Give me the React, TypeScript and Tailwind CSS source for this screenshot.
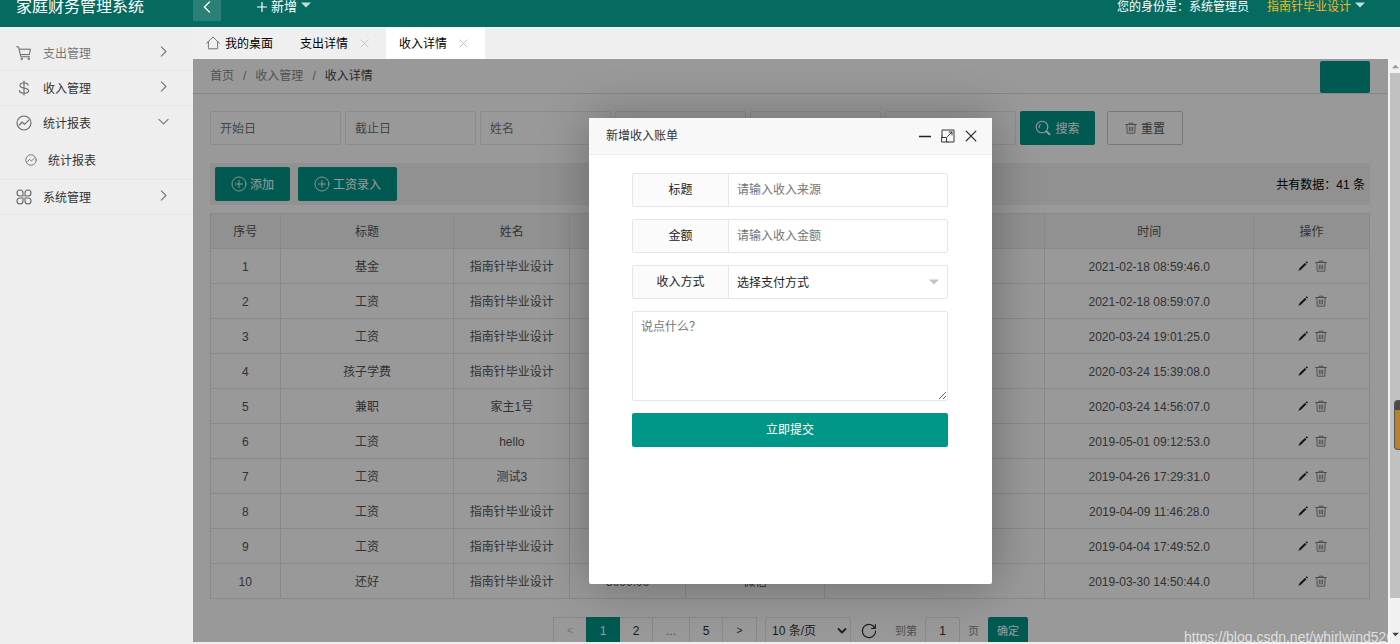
import React from 'react';

type IconProps = { className?: string };

const stroke = {
  fill: 'none',
  stroke: 'currentColor',
  strokeLinecap: 'round' as const,
  strokeLinejoin: 'round' as const,
};

const CartIcon = ({ className }: IconProps) => (
  <svg viewBox="0 0 16 16" className={className} {...stroke} strokeWidth="1">
    <path d="M0.8 1.8h1.700l2.300 10h8.800M3.400 4.200h11l-1 5.400H4.600" />
    <circle cx="5.600" cy="13.900" r="0.700" />
    <circle cx="12.600" cy="13.900" r="0.700" />
  </svg>
);

const DollarIcon = ({ className }: IconProps) => (
  <svg viewBox="0 0 16 16" className={className} {...stroke} strokeWidth="1.1">
    <path d="M8 1v14M12 5.2C12 3.6 10.4 2.8 8 2.8S4 3.8 4 5.4 5.4 7.6 8 8s4.6 1.1 4.6 2.8S10.600 13.300 8 13.300 3.400 12.300 3.400 10.600" />
  </svg>
);

const ChartIcon = ({ className }: IconProps) => (
  <svg viewBox="0 0 16 16" className={className} {...stroke} strokeWidth="1.1">
    <circle cx="8" cy="8" r="7" />
    <path d="M3.400 10l2.800-3 2.200 2.400 4.200-4" />
  </svg>
);

const CloverIcon = ({ className }: IconProps) => (
  <svg viewBox="0 0 16 16" className={className} {...stroke} strokeWidth="1.1">
    <path d="M7 7H4a3 3 0 1 1 3-3zM9 7V4a3 3 0 1 1 3 3zM7 9v3a3 3 0 1 1-3-3zM9 9h3a3 3 0 1 1-3 3z" />
  </svg>
);

const HomeIcon = ({ className }: IconProps) => (
  <svg viewBox="0 0 14 14" className={className} {...stroke} strokeWidth="0.9">
    <path d="M0.600 7.200L7 1l6.400 6.200M2.400 5.600v7.200h9.200V5.600" />
  </svg>
);

const Chevron = ({ className, d }: IconProps & { d: string }) => (
  <svg viewBox="0 0 10 10" className={className} {...stroke} strokeWidth="1">
    <path d={d} />
  </svg>
);

const RIGHT = 'M3 0.800L7.200 5 3 9.200';
const DOWN = 'M0.800 3L5 7.200 9.200 3';
const LEFT = 'M7 0.800L2.800 5 7 9.200';
const CROSS = 'M1 1l8 8M9 1l-8 8';

const Triangle = ({ className }: IconProps) => (
  <svg viewBox="0 0 10 6" className={className} fill="currentColor">
    <path d="M0 0.500h10L5 5.500z" />
  </svg>
);

const PlusCircle = ({ className }: IconProps) => (
  <svg viewBox="0 0 16 16" className={className} {...stroke} strokeWidth="0.900">
    <circle cx="8" cy="8" r="7" />
    <path d="M8 4.500v7M4.500 8h7" />
  </svg>
);

const SearchIcon = ({ className }: IconProps) => (
  <svg viewBox="0 0 16 16" className={className} {...stroke} strokeWidth="1.100">
    <circle cx="7" cy="7" r="5.800" />
    <path d="M4.200 7.600A3 3 0 0 1 5.200 4.600" />
    <path d="M11.800 11.800l2.600 2.400" strokeWidth="2" />
  </svg>
);

const TrashIcon = ({ className }: IconProps) => (
  <svg viewBox="0 0 12 12" className={className} {...stroke} strokeWidth="0.900">
    <path d="M0.600 2.500h10.800M4 2.300V1.200h4v1.100M1.800 2.700l0.400 8.500h7.600l0.400-8.500M4.300 5v4M6 5v4M7.700 5v4" />
  </svg>
);

const PencilIcon = ({ className }: IconProps) => (
  <svg viewBox="0 0 12 12" className={className} fill="currentColor">
    <path d="M9.600 1.200l1.400 1.200-0.900 1.200-1.600-1.300zM7.900 2.900l1.600 1.300-5.300 5.300L1.400 11l1.300-2.900z" />
  </svg>
);

const RefreshIcon = ({ className }: IconProps) => (
  <svg viewBox="0 0 16 16" className={className} {...stroke} strokeWidth="1.100">
    <path d="M14 5.200A6.600 6.600 0 1 0 14.600 8M14.400 1.600v3.800h-3.800" />
  </svg>
);

const ExpandIcon = ({ className }: IconProps) => (
  <svg viewBox="0 0 14 14" className={className} {...stroke} strokeWidth="0.900">
    <path d="M1 7V1h12v12H7M1 8.500h4.500V13H1zM1 7v1.500M5.500 13H7M6.500 7.500l4.500-4.500M8 3h3v3" />
  </svg>
);

const menu = [
  { label: '支出管理', Icon: CartIcon, open: false, dim: true },
  { label: '收入管理', Icon: DollarIcon, open: false, dim: false },
  { label: '统计报表', Icon: ChartIcon, open: true, dim: false },
  { label: '系统管理', Icon: CloverIcon, open: false, dim: false },
];

const rows = [
  ['1', '基金', '指南针毕业设计', '', '', '2021-02-18 08:59:46.0'],
  ['2', '工资', '指南针毕业设计', '', '', '2021-02-18 08:59:07.0'],
  ['3', '工资', '指南针毕业设计', '', '', '2020-03-24 19:01:25.0'],
  ['4', '孩子学费', '指南针毕业设计', '', '', '2020-03-24 15:39:08.0'],
  ['5', '兼职', '家主1号', '', '', '2020-03-24 14:56:07.0'],
  ['6', '工资', 'hello', '', '', '2019-05-01 09:12:53.0'],
  ['7', '工资', '测试3', '', '', '2019-04-26 17:29:31.0'],
  ['8', '工资', '指南针毕业设计', '', '', '2019-04-09 11:46:28.0'],
  ['9', '工资', '指南针毕业设计', '', '', '2019-04-04 17:49:52.0'],
  ['10', '还好', '指南针毕业设计', '8000.00', '微信', '2019-03-30 14:50:44.0'],
];

const filters = ['开始日', '截止日', '姓名', '', '', ''];

function Header() {
  return (
    <header className="flex h-[27px] shrink-0 items-end overflow-hidden bg-[#056b61] text-white">
      <div className="flex h-10 flex-1 items-center">
        <h1 className="w-[193px] shrink-0 pl-4 text-base">家庭财务管理系统</h1>
        <button aria-label="收起菜单" className="flex size-7 items-center justify-center bg-[#2a7f76]">
          <Chevron d={LEFT} className="size-3" />
        </button>
        <button className="ml-9 flex items-center gap-1 text-[13px]">
          <svg viewBox="0 0 10 10" className="size-[10px]" {...stroke} strokeWidth="1.200">
            <path d="M5 0.500v9M0.500 5h9" />
          </svg>
          新增
          <Triangle className="mb-1 h-[6px] w-[10px] text-[#c3dcd9]" />
        </button>
        <div className="ml-auto flex items-center gap-[18px] pr-[35px]">
          <span>您的身份是：系统管理员</span>
          <button className="flex items-center gap-1 text-[#f5b81a]">
            指南针毕业设计
            <Triangle className="mb-1 h-[6px] w-[10px] text-[#c3dcd9]" />
          </button>
        </div>
      </div>
    </header>
  );
}

function Sidebar() {
  return (
    <nav className="w-[193px] shrink-0 bg-[#eeeeee] pt-[9px] text-[#333]">
      <ul>
        {menu.map(({ label, Icon, open, dim }) => (
          <li key={label} className="border-b border-[#e6e6e6]">
            <a href="#" className={dim ? 'flex h-[34px] items-center pl-4 pr-6 text-[#777]' : 'flex h-[34px] items-center pl-4 pr-6'}>
              <Icon className="size-4 text-[#666]" />
              <span className="ml-[11px] pt-[2px]">{label}</span>
              <span className="ml-auto pb-1">
                <Chevron d={open ? DOWN : RIGHT} className="size-[11px] text-[#777]" />
              </span>
            </a>
            {open && (
              <a href="#" className="flex h-[39px] items-center pl-[25px]">
                <ChartIcon className="size-3 text-[#666]" />
                <span className="ml-[11px] pt-[2px]">统计报表</span>
              </a>
            )}
          </li>
        ))}
      </ul>
    </nav>
  );
}

function Tabs() {
  return (
    <div className="flex h-8 shrink-0 items-stretch bg-[#efeff0] text-black">
      <a href="#" className="flex items-center gap-[5px] pl-[13px] pr-[14px]">
        <HomeIcon className="size-[14px] text-[#666]" />
        <span className="pt-[2px]">我的桌面</span>
      </a>
      <div className="flex items-center gap-3 pl-[13px] pr-[17px]">
        <a href="#" className="pt-[2px]">支出详情</a>
        <button aria-label="关闭支出详情">
          <Chevron d={CROSS} className="size-[9px] text-[#c0c0c0]" />
        </button>
      </div>
      <div className="flex items-center gap-3 bg-white pl-[13px] pr-[17px]">
        <a href="#" className="pt-[2px]">收入详情</a>
        <button aria-label="关闭收入详情">
          <Chevron d={CROSS} className="size-[9px] text-[#c0c0c0]" />
        </button>
      </div>
    </div>
  );
}

function Pagination() {
  const cell = 'flex w-[33px] items-center justify-center border border-l-0 border-[#e4e4e4]';
  return (
    <div className="flex h-7 items-stretch pl-[343px] text-[#333]">
      <button aria-label="上一页" className="flex w-[33px] items-center justify-center border border-r-0 border-[#e4e4e4] text-[10px] text-[#bbb]">&lt;</button>
      <button className="w-[34px] bg-[#009688] text-white">1</button>
      <button className={cell}>2</button>
      <span className="flex w-[37px] items-center justify-center border border-l-0 border-[#e4e4e4] text-[#888]">...</span>
      <button className={cell}>5</button>
      <button aria-label="下一页" className="flex w-[34px] items-center justify-center border border-l-0 border-[#e4e4e4] text-[10px]">&gt;</button>
      <div className="relative ml-2 flex w-[86px]">
        <select aria-label="每页条数" className="w-full appearance-none rounded-xs border border-[#e4e4e4] bg-transparent pl-[6px]">
          <option>10 条/页</option>
        </select>
        <svg viewBox="0 0 10 10" className="pointer-events-none absolute right-1 top-[9px] size-[10px]" {...stroke} strokeWidth="1.800">
          <path d="M1.500 3L5 6.500 8.500 3" />
        </svg>
      </div>
      <button aria-label="刷新" className="ml-[10px] flex items-center">
        <RefreshIcon className="size-4" />
      </button>
      <label htmlFor="page" className="ml-[18px] flex items-center text-[11px] text-[#888]">到第</label>
      <input id="page" defaultValue="1" className="ml-2 w-[35px] rounded-xs border border-[#e4e4e4] text-center" />
      <span className="ml-2 flex items-center text-[11px] text-[#888]">页</span>
      <button className="ml-[9px] w-10 rounded-xs bg-[#009688] text-[11px] text-white">确定</button>
    </div>
  );
}

function ListPage() {
  const cell = 'border border-[#e5e5e5] p-0 pt-[2px] font-normal';
  return (
    <main className="h-full overflow-hidden bg-white text-[#555]">
      <div className="flex h-[35px] items-start border-b border-[#e0e0e0] pl-[17px] pr-[18px]">
        <ol className="flex h-[34px] items-center gap-[9px] text-[#888]">
          <li><a href="#">首页</a></li>
          <li>/</li>
          <li><a href="#">收入管理</a></li>
          <li>/</li>
          <li className="text-[#444]">收入详情</li>
        </ol>
        <button aria-label="刷新页面" className="ml-auto mt-[2px] h-8 w-[50px] rounded-xs bg-[#009688]" />
      </div>

      <div className="pl-[17px] pr-[18px]">
        <form className="mt-[17px] flex h-[34px] gap-1" onSubmit={(e) => e.preventDefault()}>
          {filters.map((f, i) => (
            <input
              key={i}
              aria-label={f || '筛选条件'}
              placeholder={f}
              className="w-[131px] rounded-xs border border-[#eaeaea] pl-[9px] pt-[2px] placeholder:text-[#757575]"
            />
          ))}
          <button className="flex w-[75px] items-center justify-center gap-1 rounded-xs bg-[#009688] text-white">
            <SearchIcon className="size-4" />
            <span className="pt-[2px]">搜索</span>
          </button>
          <button type="reset" className="ml-2 flex w-[76px] items-center justify-center gap-1 rounded-xs border border-[#c9c9c9] text-[#555]">
            <TrashIcon className="size-3 text-[#777]" />
            <span className="pt-[2px]">重置</span>
          </button>
        </form>

        <div className="mt-[18px] flex h-[42px] items-center gap-2 bg-[#f2f2f2] px-[5px]">
          <button className="flex h-[34px] w-[75px] items-center justify-center gap-[3px] rounded-xs bg-[#009688] text-white">
            <PlusCircle className="size-4" />
            <span className="pt-[2px]">添加</span>
          </button>
          <button className="flex h-[34px] w-[99px] items-center justify-center gap-[3px] rounded-xs bg-[#009688] text-white">
            <PlusCircle className="size-4" />
            <span className="pt-[2px]">工资录入</span>
          </button>
          <span className="ml-auto pt-[2px] text-black">共有数据：41 条</span>
        </div>

        <table className="mt-2 w-full table-fixed border-collapse text-center">
          <colgroup>
            <col className="w-[6%]" />
            <col className="w-[15%]" />
            <col className="w-[10%]" />
            <col className="w-[10%]" />
            <col className="w-[12%]" />
            <col className="w-[19%]" />
            <col className="w-[18%]" />
            <col className="w-[10%]" />
          </colgroup>
          <thead>
            <tr className="h-[35px] bg-[#f2f2f2]">
              {['序号', '标题', '姓名', '', '', '', '时间', '操作'].map((h, i) => (
                <th key={i} className={cell}>{h}</th>
              ))}
            </tr>
          </thead>
          <tbody>
            {rows.map(([id, title, name, amount, method, time]) => (
              <tr key={id} className="h-[35px]">
                <td className={cell}>{id}</td>
                <td className={cell}>{title}</td>
                <td className={cell}>{name}</td>
                <td className={cell}>{amount}</td>
                <td className={cell}>{method}</td>
                <td className={cell} />
                <td className={cell}>{time}</td>
                <td className="border border-[#e5e5e5] p-0">
                  <div className="flex items-center justify-center gap-[6px]">
                    <button aria-label="编辑"><PencilIcon className="size-3 text-[#222]" /></button>
                    <button aria-label="删除"><TrashIcon className="size-3 text-[#777]" /></button>
                  </div>
                </td>
              </tr>
            ))}
          </tbody>
        </table>

        <div className="mt-[18px]">
          <Pagination />
        </div>
      </div>
    </main>
  );
}

function Dialog() {
  const row = 'flex h-[34px] rounded-xs border border-[#e6e6e6]';
  const label = 'flex w-24 shrink-0 items-center justify-center border-r border-[#e6e6e6] bg-[#fbfbfb]';
  return (
    <section
      role="dialog"
      aria-labelledby="dialog-title"
      className="flex h-[466px] w-[403px] flex-col rounded-xs bg-white text-[#222] shadow-[1px_1px_50px_rgba(0,0,0,0.3)]"
    >
      <div className="flex h-[37px] shrink-0 items-center border-b border-[#eee] bg-[#f8f8f8] pl-[17px] pr-[15px]">
        <h2 id="dialog-title" className="pt-px text-[#333]">新增收入账单</h2>
        <div className="ml-auto flex items-center gap-[10px] pt-px text-[#222]">
          <button aria-label="最小化">
            <svg viewBox="0 0 12 12" className="size-3" {...stroke} strokeWidth="1.500">
              <path d="M0 6.500h12" />
            </svg>
          </button>
          <button aria-label="最大化"><ExpandIcon className="size-[14px]" /></button>
          <button aria-label="关闭"><Chevron d={CROSS} className="size-3" /></button>
        </div>
      </div>
      <form className="flex flex-col gap-3 pl-[43px] pr-11 pt-[18px]" onSubmit={(e) => e.preventDefault()}>
        <div className={row}>
          <label htmlFor="title" className={label}>标题</label>
          <input id="title" placeholder="请输入收入来源" className="min-w-0 flex-1 pl-2 placeholder:text-[#757575]" />
        </div>
        <div className={row}>
          <label htmlFor="amount" className={label}>金额</label>
          <input id="amount" placeholder="请输入收入金额" className="min-w-0 flex-1 pl-2 placeholder:text-[#757575]" />
        </div>
        <div className={row}>
          <label htmlFor="method" className={label}>收入方式</label>
          <div className="relative flex flex-1">
            <select id="method" className="w-full appearance-none pl-2 pt-[2px]">
              <option>选择支付方式</option>
            </select>
            <Triangle className="pointer-events-none absolute right-2 top-[13px] h-[6px] w-[10px] text-[#c2c2c2]" />
          </div>
        </div>
        <textarea
          aria-label="备注"
          placeholder="说点什么？"
          className="h-[90px] w-full resize-y rounded-xs border border-[#e6e6e6] px-2 py-[5px] leading-5 placeholder:text-[#757575]"
        />
        <button className="h-[34px] rounded-xs bg-[#009688] text-white">立即提交</button>
      </form>
    </section>
  );
}

function Scrollbar() {
  return (
    <div aria-hidden="true" className="relative flex w-3 shrink-0 flex-col items-center border-l-2 border-[#f4f4f4] bg-[#f1f1f1]">
      <div className="flex h-[14px] items-center">
        <Triangle className="h-[5px] w-[7px] rotate-180 text-[#999]" />
      </div>
      <div className="w-full flex-1 bg-[#c1c1c1]" />
      <div className="flex h-[46px] items-end pb-[7px]">
        <Triangle className="h-[5px] w-[7px] text-[#444]" />
      </div>
      <div className="absolute right-0 top-[341px] h-[50px] w-[6px] overflow-hidden rounded-l-sm border border-r-0 border-[#555] bg-[#b98226]">
        <div className="h-[9px] bg-[#4a4a4a]" />
      </div>
    </div>
  );
}

export default function App() {
  return (
    <div className="relative flex h-screen flex-col overflow-hidden bg-[#eeeeee] font-['Liberation_Sans','Noto_Sans_CJK_SC',sans-serif] text-xs">
      <Header />
      <div className="flex min-h-0 flex-1">
        <Sidebar />
        <div className="flex min-w-0 flex-1 flex-col">
          <Tabs />
          <div className="flex min-h-0 flex-1">
            <div className="relative mb-[2px] min-w-0 flex-1 overflow-hidden">
              <ListPage />
              <div className="absolute inset-0 flex items-center justify-center bg-black/40">
                <Dialog />
              </div>
            </div>
            <Scrollbar />
          </div>
        </div>
      </div>
      <span className="pointer-events-none absolute -bottom-[3px] left-[1184px] whitespace-nowrap text-sm text-white/70">
        https://blog.csdn.net/whirlwind526
      </span>
    </div>
  );
}
